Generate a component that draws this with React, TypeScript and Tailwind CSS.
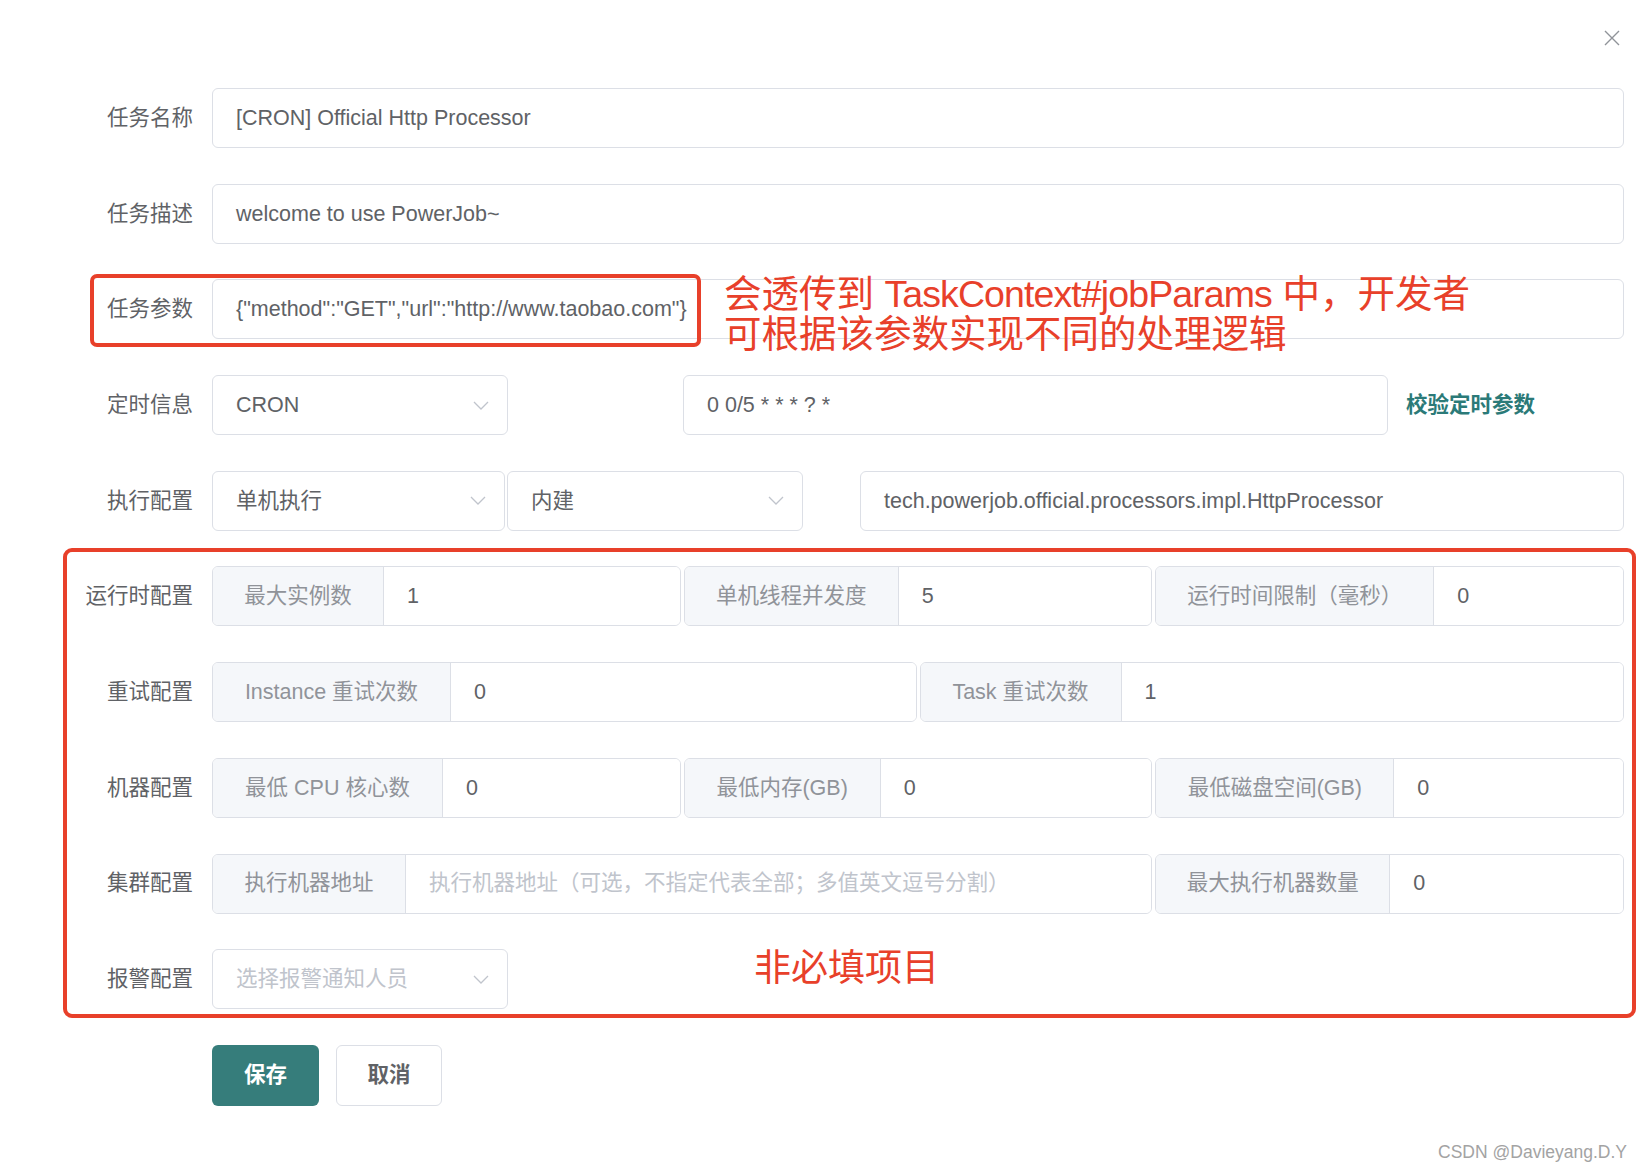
import React from "react";

const font = "font-['Liberation_Sans','Noto_Sans_CJK_SC',sans-serif]";

const Chevron: React.FC = () => (
  <svg width="16" height="9" viewBox="0 0 16 9" fill="none" className="shrink-0">
    <path d="M1 1l7 7 7-7" stroke="#c0c4cc" strokeWidth="1.3" />
  </svg>
);

const Label: React.FC<{ text: string }> = ({ text }) => (
  <div className="w-[212px] shrink-0 pr-[19px] text-right text-[21.5px] text-[#606266]">
    {text}
  </div>
);

const Input: React.FC<{ value?: string; placeholder?: string; className?: string }> = ({
  value,
  placeholder,
  className = "",
}) => (
  <div
    className={`h-[60px] flex items-center pl-[23px] border border-[#dcdfe6] rounded-[6px] bg-white text-[21.5px] whitespace-nowrap overflow-hidden ${className}`}
  >
    {value ? (
      <span className="text-[#606266]">{value}</span>
    ) : (
      <span className="text-[#c0c4cc]">{placeholder}</span>
    )}
  </div>
);

const Select: React.FC<{ value?: string; placeholder?: string; className?: string }> = ({
  value,
  placeholder,
  className = "",
}) => (
  <div
    className={`h-[60px] flex items-center justify-between pl-[23px] pr-[18px] border border-[#dcdfe6] rounded-[6px] bg-white text-[21.5px] ${className}`}
  >
    {value ? (
      <span className="text-[#606266]">{value}</span>
    ) : (
      <span className="text-[#c0c4cc]">{placeholder}</span>
    )}
    <Chevron />
  </div>
);

const Group: React.FC<{ addon: string; addonW: string; value?: string; placeholder?: string; className?: string }> = ({
  addon,
  addonW,
  value,
  placeholder,
  className = "",
}) => (
  <div
    className={`h-[60px] flex border border-[#dcdfe6] rounded-[6px] overflow-hidden text-[21.5px] ${className}`}
  >
    <div
      className={`${addonW} shrink-0 flex items-center justify-center bg-[#f5f7fa] text-[#909399] border-r border-[#dcdfe6] whitespace-nowrap`}
    >
      {addon}
    </div>
    <div className="flex-1 flex items-center pl-[23px] bg-white whitespace-nowrap overflow-hidden">
      {value ? (
        <span className="text-[#606266]">{value}</span>
      ) : (
        <span className="text-[#c0c4cc]">{placeholder}</span>
      )}
    </div>
  </div>
);

export default function App() {
  return (
    <div className={`relative w-full min-h-[1171px] bg-white ${font}`}>
      <div className="h-[88px] flex justify-end pt-[30px] pr-[24px]">
        <svg width="16" height="16" viewBox="0 0 16 16" fill="none">
          <path d="M1 1l14 14M15 1L1 15" stroke="#909399" strokeWidth="1.4" />
        </svg>
      </div>

      <div className="flex flex-col gap-[35.7px] pr-[20px]">
        <div className="flex items-center">
          <Label text="任务名称" />
          <Input value="[CRON] Official Http Processor" className="flex-1" />
        </div>

        <div className="flex items-center">
          <Label text="任务描述" />
          <Input value="welcome to use PowerJob~" className="flex-1" />
        </div>

        <div className="relative flex items-center">
          <Label text="任务参数" />
          <Input value={'{"method":"GET","url":"http://www.taobao.com"}'} className="flex-1" />
          <div className="absolute left-[90px] top-[-5px] w-[611px] h-[73px] border-[4px] border-[#e8402a] rounded-[7px] pointer-events-none" />
          <div className="absolute left-[724px] top-[-5px] text-[37.5px] leading-[40px] text-[#e8402a] whitespace-nowrap">
            <div>
              会透传到 <span className="tracking-[-0.9px]">TaskContext#jobParams</span> 中，开发者
            </div>
            <div>可根据该参数实现不同的处理逻辑</div>
          </div>
        </div>

        <div className="flex items-center">
          <Label text="定时信息" />
          <Select value="CRON" className="w-[296px]" />
          <Input value="0 0/5 * * * ? *" className="w-[705px] ml-[175px]" />
          <span className="ml-[18px] text-[21.5px] font-bold text-[#2b7a78]">校验定时参数</span>
        </div>

        <div className="flex items-center">
          <Label text="执行配置" />
          <Select value="单机执行" className="w-[293px]" />
          <Select value="内建" className="w-[296px] ml-[2px]" />
          <Input value="tech.powerjob.official.processors.impl.HttpProcessor" className="flex-1 ml-[57px]" />
        </div>

        <div className="relative flex flex-col gap-[35.7px]">
          <div className="absolute left-[63px] -right-[12px] -top-[18px] -bottom-[9px] border-[4px] border-[#e8402a] rounded-[9px] pointer-events-none" />

          <div className="flex items-center">
            <Label text="运行时配置" />
            <div className="flex-1 grid grid-cols-3 gap-[3px]">
              <Group addon="最大实例数" addonW="w-[171px]" value="1" />
              <Group addon="单机线程并发度" addonW="w-[214px]" value="5" />
              <Group addon="运行时间限制（毫秒）" addonW="w-[278px]" value="0" />
            </div>
          </div>

          <div className="flex items-center">
            <Label text="重试配置" />
            <div className="flex-1 grid grid-cols-2 gap-[3px]">
              <Group addon="Instance 重试次数" addonW="w-[238px]" value="0" />
              <Group addon="Task 重试次数" addonW="w-[201px]" value="1" />
            </div>
          </div>

          <div className="flex items-center">
            <Label text="机器配置" />
            <div className="flex-1 grid grid-cols-3 gap-[3px]">
              <Group addon="最低 CPU 核心数" addonW="w-[230px]" value="0" />
              <Group addon="最低内存(GB)" addonW="w-[196px]" value="0" />
              <Group addon="最低磁盘空间(GB)" addonW="w-[238px]" value="0" />
            </div>
          </div>

          <div className="flex items-center">
            <Label text="集群配置" />
            <div className="flex-1 grid grid-cols-3 gap-[3px]">
              <Group
                addon="执行机器地址"
                addonW="w-[193px]"
                placeholder="执行机器地址（可选，不指定代表全部；多值英文逗号分割）"
                className="col-span-2"
              />
              <Group addon="最大执行机器数量" addonW="w-[234px]" value="0" />
            </div>
          </div>

          <div className="relative flex items-center">
            <Label text="报警配置" />
            <Select placeholder="选择报警通知人员" className="w-[296px]" />
            <span className="ml-[246px] -mt-[20px] text-[37px] leading-[40px] text-[#e8402a]">非必填项目</span>
          </div>
        </div>

        <div className="flex items-center pl-[212px] gap-[17px]">
          <button className="w-[107px] h-[61px] rounded-[6px] bg-[#367d7b] text-white text-[21.5px] font-bold">
            保存
          </button>
          <button className="w-[106px] h-[61px] rounded-[6px] bg-white border border-[#dcdfe6] text-[#606266] text-[21.5px] font-bold">
            取消
          </button>
        </div>
      </div>

      <div className="absolute right-[17px] bottom-[6px] text-[17.5px] text-[#a3a3a3]">CSDN @Davieyang.D.Y</div>
    </div>
  );
}
